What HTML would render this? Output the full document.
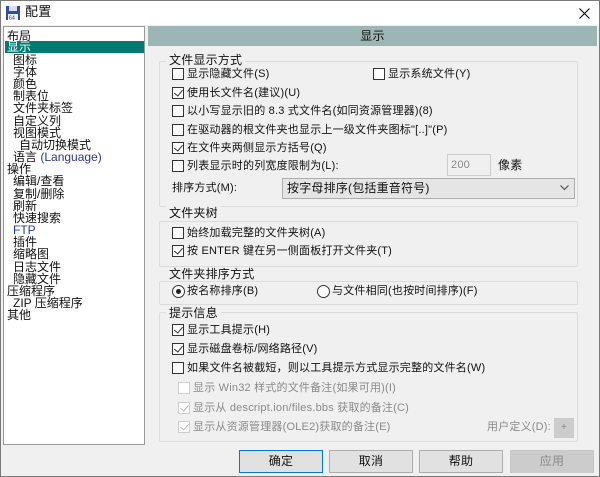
<!DOCTYPE html>
<html><head><meta charset="utf-8"><style>
*{box-sizing:border-box;margin:0;padding:0}
body{width:600px;height:477px;background:#f0f0f0;font-family:"Liberation Sans","Noto Sans CJK SC",sans-serif;font-size:11px;letter-spacing:0.2px;color:#111;position:relative;overflow:hidden;border:1px solid #7a7a7a}
.a{position:absolute;white-space:nowrap;line-height:14px}
.title{position:absolute;left:0;top:0;width:598px;height:24px;background:#fff}
.tree{position:absolute;left:2px;top:25px;width:142px;height:419px;background:#fff;border:1px solid #999}
.tree div{position:absolute;white-space:nowrap;line-height:12px;font-size:12px;letter-spacing:0}
.hdr{position:absolute;left:147px;top:25px;width:449px;height:20px;background:#9bb6b4;text-align:center;line-height:20px;font-size:12px}
.grp{position:absolute;border:1px solid #dcdcdc;border-radius:2px}
.lg{position:absolute;background:#f0f0f0;padding:0 3px;line-height:14px;font-size:12px}
.cb{position:absolute;width:12px;height:12px;border:1px solid #333;background:#fff}
.cb.c::after{content:"";position:absolute;left:3px;top:0px;width:4px;height:7px;border:solid #333;border-width:0 1.3px 1.3px 0;transform:rotate(40deg)}
.cb.d{border-color:#ccc}.cb.d.c::after{border-color:#bbb}
.g{color:#8a8a8a}
.rb{position:absolute;width:13px;height:13px;border:1px solid #333;border-radius:50%;background:#fff}
.rb.on::after{content:"";position:absolute;left:3px;top:3px;width:5px;height:5px;border-radius:50%;background:#222}
.btn{position:absolute;top:449px;width:84px;height:23px;border:1px solid #adadad;background:#e1e1e1;text-align:center;line-height:21px;font-size:12px}
</style></head><body>
<div class="title">
<svg style="position:absolute;left:4px;top:4px" width="16" height="16" viewBox="0 0 16 16"><rect x="1" y="1" width="14" height="14" fill="#2a4fa8"/><rect x="4" y="1" width="8" height="5" fill="#dde"/><rect x="3" y="9" width="10" height="6" fill="#eee"/><text x="4" y="14.5" font-size="5" fill="#333" font-family="Liberation Sans">64</text></svg>
<div class="a" style="left:24px;top:4px;font-size:13px">配置</div>
<svg style="position:absolute;left:578px;top:7px" width="11" height="11"><path d="M0.5 0.5L10.5 10.5M10.5 0.5L0.5 10.5" stroke="#111" stroke-width="1.2"/></svg>
</div>
<div class="tree">
<div style="left:3px;top:3px">布局</div>
<div style="left:1px;top:14px;width:139px;height:12px;background:#007a72;color:#fff;padding-left:2px">显示</div>
<div style="left:9px;top:27px">图标</div>
<div style="left:9px;top:39px">字体</div>
<div style="left:9px;top:51px">颜色</div>
<div style="left:9px;top:63px">制表位</div>
<div style="left:9px;top:75px">文件夹标签</div>
<div style="left:9px;top:88px">自定义列</div>
<div style="left:9px;top:100px">视图模式</div>
<div style="left:15px;top:112px">自动切换模式</div>
<div style="left:9px;top:124px">语言 <span style="color:#2a3a8a">(Language)</span></div>
<div style="left:3px;top:136px">操作</div>
<div style="left:9px;top:148px">编辑/查看</div>
<div style="left:9px;top:161px">复制/删除</div>
<div style="left:9px;top:173px">刷新</div>
<div style="left:9px;top:185px">快速搜索</div>
<div style="left:9px;top:197px;color:#2a3a8a">FTP</div>
<div style="left:9px;top:209px">插件</div>
<div style="left:9px;top:221px">缩略图</div>
<div style="left:9px;top:234px">日志文件</div>
<div style="left:9px;top:246px">隐藏文件</div>
<div style="left:3px;top:258px">压缩程序</div>
<div style="left:9px;top:270px">ZIP 压缩程序</div>
<div style="left:3px;top:282px">其他</div>
</div>
<div class="hdr">显示</div>

<div class="grp" style="left:158px;top:60px;width:419px;height:146px"></div>
<div class="lg" style="left:165px;top:52px">文件显示方式</div>
<div class="cb" style="left:171px;top:67px"></div><div class="a" style="left:186px;top:66px">显示隐藏文件(S)</div>
<div class="cb" style="left:372px;top:67px"></div><div class="a" style="left:387px;top:66px">显示系统文件(Y)</div>
<div class="cb c" style="left:171px;top:86px"></div><div class="a" style="left:186px;top:85px">使用长文件名(建议)(U)</div>
<div class="cb" style="left:171px;top:104px"></div><div class="a" style="left:186px;top:103px">以小写显示旧的 8.3 式文件名(如同资源管理器)(8)</div>
<div class="cb" style="left:171px;top:123px"></div><div class="a" style="left:186px;top:122px">在驱动器的根文件夹也显示上一级文件夹图标"[..]"(P)</div>
<div class="cb c" style="left:171px;top:141px"></div><div class="a" style="left:186px;top:140px">在文件夹两侧显示方括号(Q)</div>
<div class="cb" style="left:171px;top:159px"></div><div class="a" style="left:186px;top:158px">列表显示时的列宽度限制为(L):</div>
<div style="position:absolute;left:446px;top:153px;width:44px;height:22px;border:1px solid #ccc;background:#f0f0f0;color:#888;padding:3px 3px;line-height:14px">200</div>
<div class="a" style="left:497px;top:157px;font-size:12px">像素</div>
<div class="a" style="left:171px;top:180px">排序方式(M):</div>
<div style="position:absolute;left:281px;top:177px;width:293px;height:21px;border:1px solid #adadad;background:#e5e5e5;padding:2px 4px;line-height:15px;font-size:12px">按字母排序(包括重音符号)</div>
<svg style="position:absolute;left:559px;top:184px" width="9" height="6"><path d="M0.5 0.5L4.5 4.5L8.5 0.5" stroke="#444" fill="none"/></svg>

<div class="grp" style="left:158px;top:220px;width:419px;height:46px"></div>
<div class="lg" style="left:165px;top:205px">文件夹树</div>
<div class="cb" style="left:171px;top:226px"></div><div class="a" style="left:186px;top:225px">始终加载完整的文件夹树(A)</div>
<div class="cb c" style="left:171px;top:244px"></div><div class="a" style="left:186px;top:243px">按 ENTER 键在另一侧面板打开文件夹(T)</div>

<div class="grp" style="left:158px;top:280px;width:419px;height:24px"></div>
<div class="lg" style="left:165px;top:266px">文件夹排序方式</div>
<div class="rb on" style="left:171px;top:284px"></div><div class="a" style="left:186px;top:283px">按名称排序(B)</div>
<div class="rb" style="left:316px;top:284px"></div><div class="a" style="left:331px;top:283px">与文件相同(也按时间排序)(F)</div>

<div class="grp" style="left:158px;top:311px;width:419px;height:130px"></div>
<div class="lg" style="left:165px;top:305px">提示信息</div>
<div class="cb c" style="left:171px;top:323px"></div><div class="a" style="left:186px;top:322px">显示工具提示(H)</div>
<div class="cb c" style="left:171px;top:342px"></div><div class="a" style="left:186px;top:341px">显示磁盘卷标/网络路径(V)</div>
<div class="cb" style="left:171px;top:361px"></div><div class="a" style="left:186px;top:360px">如果文件名被截短，则以工具提示方式显示完整的文件名(W)</div>
<div class="cb d" style="left:177px;top:381px"></div><div class="a g" style="left:192px;top:380px">显示 Win32 样式的文件备注(如果可用)(I)</div>
<div class="cb d c" style="left:177px;top:401px"></div><div class="a g" style="left:192px;top:400px">显示从 descript.ion/files.bbs 获取的备注(C)</div>
<div class="cb d c" style="left:177px;top:420px"></div><div class="a g" style="left:192px;top:419px">显示从资源管理器(OLE2)获取的备注(E)</div>
<div class="a g" style="left:486px;top:419px">用户定义(D):</div>
<div style="position:absolute;left:553px;top:417px;width:20px;height:20px;background:#ccc;color:#888;text-align:center;line-height:20px;font-size:10px">+</div>

<div class="btn" style="left:238px;border:1px solid #0078d7">确定</div>
<div class="btn" style="left:328px">取消</div>
<div class="btn" style="left:418px">帮助</div>
<div class="btn" style="left:509px;border-color:#c8c8c8;background:#ccc;color:#8a8a8a">应用</div>
</body></html>
